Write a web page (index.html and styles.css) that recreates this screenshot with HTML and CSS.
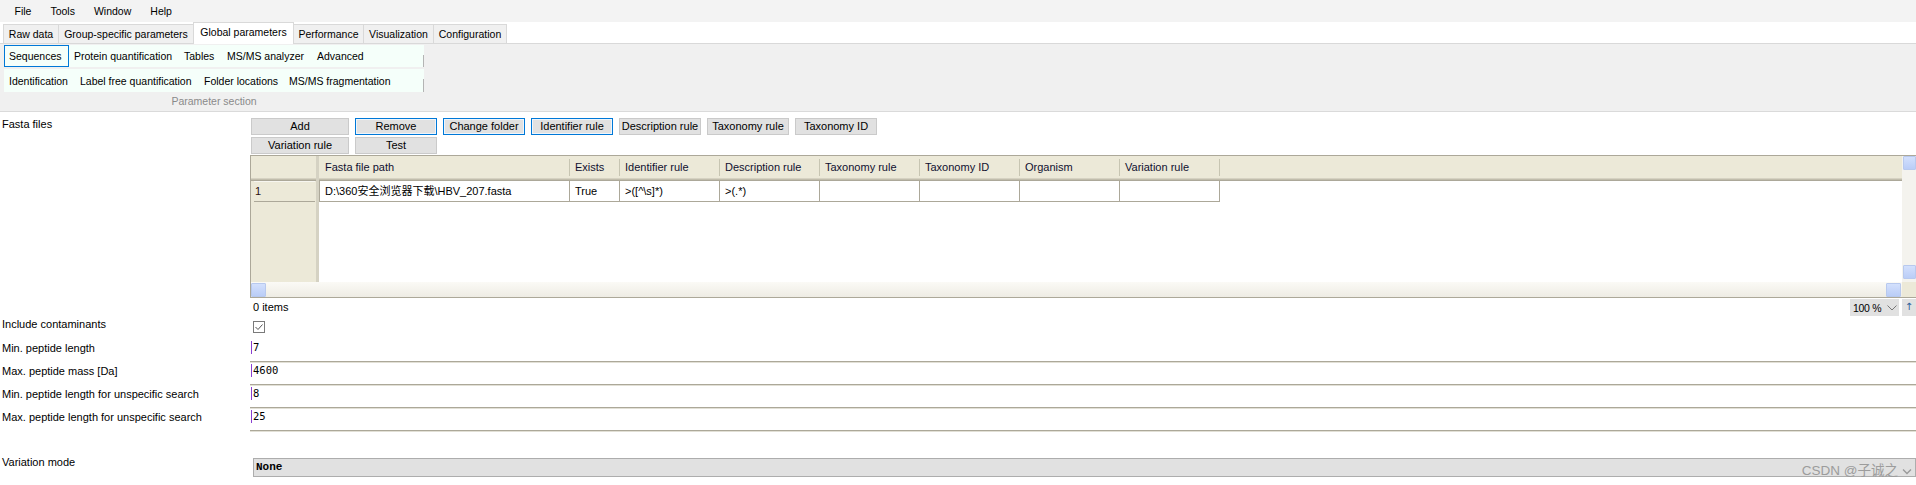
FILE: index.html
```html
<!DOCTYPE html>
<html>
<head>
<meta charset="utf-8">
<title>Global parameters</title>
<link rel="stylesheet" href="styles.css">
</head>
<body>
<div class="menubar">
  <span class="menu">File</span><span class="menu">Tools</span><span class="menu">Window</span><span class="menu">Help</span>
</div>
<div class="tabstrip">
  <div class="tab t-raw">Raw data</div>
  <div class="tab t-group">Group-specific parameters</div>
  <div class="tab t-global active">Global parameters</div>
  <div class="tab t-perf">Performance</div>
  <div class="tab t-vis">Visualization</div>
  <div class="tab t-conf">Configuration</div>
</div>
<div class="ribbon">
  <div class="group">
    <div class="grow">
      <div class="gitem selected w-seq">Sequences</div>
      <div class="gitem w-prot">Protein quantification</div>
      <div class="gitem w-tab">Tables</div>
      <div class="gitem w-msa">MS/MS analyzer</div>
      <div class="gitem w-adv">Advanced</div>
    </div>
    <div class="grow">
      <div class="gitem w-ident">Identification</div>
      <div class="gitem w-lfq">Label free quantification</div>
      <div class="gitem w-fold">Folder locations</div>
      <div class="gitem w-msf">MS/MS fragmentation</div>
    </div>
    <div class="glabel">Parameter section</div>
  </div>
</div>
<div class="content">
  <div class="field fasta">
    <div class="label">Fasta files</div>
    <div class="value">
      <div class="btnrows">
        <div class="btnrow">
          <div class="btn wide">Add</div>
          <div class="btn focus">Remove</div>
          <div class="btn focus">Change folder</div>
          <div class="btn focus">Identifier rule</div>
          <div class="btn">Description rule</div>
          <div class="btn">Taxonomy rule</div>
          <div class="btn">Taxonomy ID</div>
        </div>
        <div class="btnrow">
          <div class="btn wide">Variation rule</div>
          <div class="btn">Test</div>
        </div>
      </div>
      <div class="grid">
        <div class="grid-main">
          <div class="rowhdr-col">
            <div class="corner-hdr"></div>
            <div class="rowhdr">1</div>
          </div>
          <div class="data">
            <div class="hdr-row">
              <div class="hcell c-path">Fasta file path</div>
              <div class="hcell c-exists">Exists</div>
              <div class="hcell c-std">Identifier rule</div>
              <div class="hcell c-std">Description rule</div>
              <div class="hcell c-std">Taxonomy rule</div>
              <div class="hcell c-std">Taxonomy ID</div>
              <div class="hcell c-std">Organism</div>
              <div class="hcell c-std">Variation rule</div>
            </div>
            <div class="drow">
              <div class="dcell c-path first">D:\360安全浏览器下载\HBV_207.fasta</div>
              <div class="dcell c-exists">True</div>
              <div class="dcell c-std">&gt;([^\s]*)</div>
              <div class="dcell c-std">&gt;(.*)</div>
              <div class="dcell c-std"></div>
              <div class="dcell c-std"></div>
              <div class="dcell c-std"></div>
              <div class="dcell c-std"></div>
            </div>
          </div>
        </div>
        <div class="vscroll"><div class="sbtn"></div><div class="sbtn"></div></div>
        <div class="hscroll"><div class="sbtn"></div><div class="sbtn"></div></div>
        <div class="sc-corner"></div>
      </div>
      <div class="gridfoot">
        <span class="count">0 items</span>
        <div class="zoombox">100 %<svg class="chev" width="10" height="6" viewBox="0 0 10 6"><polyline points="0.5,0.5 5,5 9.5,0.5" fill="none" stroke="#777" stroke-width="1"/></svg></div>
        <div class="upbox">↑</div>
      </div>
    </div>
  </div>

  <div class="field row-check">
    <div class="label">Include contaminants</div>
    <div class="value">
      <svg class="checkbox" width="12" height="12" viewBox="0 0 12 12"><rect x="0.5" y="0.5" width="11" height="11" fill="#fff" stroke="#7a7a7a"/><polyline points="2.5,6 5,8.5 9.5,3.5" fill="none" stroke="#555" stroke-width="1"/></svg>
    </div>
  </div>
  <div class="field row-input">
    <div class="label">Min. peptide length</div>
    <div class="value input"><span class="caret-text">7</span></div>
  </div>
  <div class="field row-input">
    <div class="label">Max. peptide mass [Da]</div>
    <div class="value input"><span class="caret-text">4600</span></div>
  </div>
  <div class="field row-input">
    <div class="label">Min. peptide length for unspecific search</div>
    <div class="value input"><span class="caret-text">8</span></div>
  </div>
  <div class="field row-input">
    <div class="label">Max. peptide length for unspecific search</div>
    <div class="value input"><span class="caret-text">25</span></div>
  </div>
  <div class="field row-combo">
    <div class="label">Variation mode</div>
    <div class="value"><div class="combo">None</div></div>
  </div>
</div>
<div class="watermark">CSDN @子诚之<svg width="10" height="7" viewBox="0 0 10 7"><polyline points="1,1.5 5,5.5 9,1.5" fill="none" stroke="#999" stroke-width="1.3"/></svg></div>
</body>
</html>
```
FILE: styles.css
```css
* { box-sizing: border-box; }
html, body { margin: 0; padding: 0; }
body {
  width: 1916px;
  height: 485px;
  overflow: hidden;
  position: relative;
  background: #fff;
  color: #000;
  font-family: "Liberation Sans", "Noto Sans CJK SC", sans-serif;
  font-size: 11px;
}

/* menu */
.menubar {
  height: 22px;
  background: #f3f3f3;
  display: flex;
  align-items: center;
  padding-left: 5px;
  font-size: 10.5px;
}
.menu { padding: 0 9.5px; line-height: 14px; }

/* tabs */
.tabstrip {
  height: 22px;
  background: #fff;
  border-bottom: 1px solid #d9d9d9;
  display: flex;
  align-items: flex-end;
  padding-left: 3px;
  font-size: 10.5px;
}
.tab {
  height: 19px;
  border: 1px solid #d9d9d9;
  border-bottom: none;
  margin-right: -1px;
  background: #f0f0f0;
  display: flex;
  align-items: center;
  justify-content: center;
  line-height: 14px;
  white-space: nowrap;
}
.tab.active {
  height: 22px;
  margin-bottom: -1px;
  background: #fff;
  position: relative;
  z-index: 1;
  padding-bottom: 3px;
}
.t-raw { width: 56px; }
.t-group { width: 136px; }
.t-global { width: 101px; }
.t-perf { width: 71px; }
.t-vis { width: 71px; }
.t-conf { width: 74px; }

/* ribbon */
.ribbon {
  height: 68px;
  background: #f0f0f0;
  border-bottom: 1px solid #dadada;
  padding: 1px 0 0 4px;
  font-size: 10.5px;
}
.group { width: 420px; }
.grow {
  display: flex;
  height: 22px;
  background: linear-gradient(to bottom, transparent 45%, #b4b4b4 45%) right / 1px 100% no-repeat, #f5fffa;
}
.grow + .grow { margin-top: 2px; height: 23px; }
.gitem {
  display: flex;
  align-items: center;
  padding-left: 5px;
  white-space: nowrap;
  border: 1px solid transparent;
  padding-left: 4px;
}
.gitem.selected { border-color: #0078d7; }
.w-seq { width: 65px; }
.w-prot { width: 110px; }
.w-tab { width: 43px; }
.w-msa { width: 90px; }
.w-adv { width: 80px; }
.w-ident { width: 71px; }
.w-lfq { width: 124px; }
.w-fold { width: 85px; }
.w-msf { width: 120px; }
.glabel {
  margin-top: 2px;
  line-height: 14px;
  text-align: center;
  color: #8a8a8a;
}

/* content fields */
.field { display: flex; }
.label {
  width: 250px;
  flex: none;
  padding-left: 2px;
  white-space: nowrap;
}
.value { flex: 1; min-width: 0; }

.fasta .label { padding-top: 3px; line-height: 18px; }
.fasta .value { padding-top: 6px; }

.btnrows { display: flex; flex-direction: column; gap: 2px; margin-bottom: 1px; padding-left: 1px; }
.btnrow { display: flex; gap: 6px; }
.btn {
  width: 82px;
  height: 17px;
  background: #e1e1e1;
  border: 1px solid #cacaca;
  text-align: center;
  line-height: 15px;
  white-space: nowrap;
}
.btn.wide { width: 98px; }
.btn.focus {
  border-color: #0078d7;
  box-shadow: inset 0 0 0 1px #eef5fc;
}

/* data grid */
.grid {
  display: grid;
  grid-template-columns: 1fr 14px;
  grid-template-rows: 127px 15px;
  height: 143px;
  border-bottom: 1px solid #aca899;
}
.grid-main {
  display: flex;
  border-left: 1px solid #aca899;
  border-top: 1px solid #aca899;
  background: #fff;
  overflow: hidden;
}
.rowhdr-col {
  width: 68px;
  flex: none;
  background: #ece9d8;
  border-right: 3px solid #d5d2c3;
}
.corner-hdr {
  height: 25px;
  background: linear-gradient(#ece9d8 0 22px, #d6d2c2 22px 23px, #c1bdac 23px 24px, #aca899 24px 25px);
}
.rowhdr {
  height: 21px;
  margin: 0 1px 0 3px;
  border-top: 1px solid #f7f6f0;
  border-bottom: 1px solid #aca899;
  padding-left: 1px;
  line-height: 19px;
  color: #2a1010;
}
.data { flex: 1; min-width: 0; }
.hdr-row {
  display: flex;
  height: 25px;
  background: linear-gradient(#ece9d8 0 22px, #d6d2c2 22px 23px, #c1bdac 23px 24px, #aca899 24px 25px);
}
.hcell {
  height: 22px;
  line-height: 22px;
  padding-left: 6px;
  white-space: nowrap;
  color: #101030;
  background: linear-gradient(#c7c5b2, #c7c5b2) right 3px / 1px 17px no-repeat;
}
.c-path { width: 251px; flex: none; }
.c-exists { width: 50px; flex: none; }
.c-std { width: 100px; flex: none; }
.hcell.c-exists, .hcell.c-std { padding-left: 5px; }
.drow { display: flex; height: 21px; }
.dcell {
  height: 21px;
  border-right: 1px solid #aca899;
  border-bottom: 1px solid #aca899;
  padding-left: 5px;
  line-height: 20px;
  white-space: nowrap;
  overflow: hidden;
}
.dcell.first { border-left: 1px solid #aca899; }

.sbtn {
  width: 14px;
  height: 14px;
  background: linear-gradient(#d3e0fd, #bacdf7);
  border: 1px solid #e4ecfd;
  outline: 1px solid #b8c9ee;
  outline-offset: -1px;
  border-radius: 1px;
}
.vscroll {
  background: #f4f3ee;
  border-top: 1px solid #aca899;
  display: flex;
  flex-direction: column;
  justify-content: space-between;
  padding: 0 0 3px 1px;
}
.vscroll .sbtn { width: 13px; }
.hscroll {
  background: linear-gradient(#fbfaf6, #eeece4);
  border-left: 1px solid #aca899;
  display: flex;
  justify-content: space-between;
  align-items: center;
  padding-right: 1px;
}
.hscroll .sbtn { width: 15px; height: 14px; }
.sc-corner { background: #ece9d8; }

.gridfoot {
  height: 18px;
  display: flex;
  align-items: flex-start;
}
.count { margin: 1px 0 0 3px; line-height: 16px; }
.zoombox {
  margin: 1px 0 0 auto;
  width: 49px;
  height: 17px;
  background: #e1e1e1;
  display: flex;
  align-items: center;
  padding-left: 3px;
  font-size: 10.5px;
  letter-spacing: -0.3px;
}
.chev { margin-left: 6px; }
.upbox {
  margin: 1px 0 0 3px;
  width: 14px;
  height: 17px;
  background: #e1e1e1;
  text-align: center;
  line-height: 16px;
  font-family: "DejaVu Sans", sans-serif;
  font-size: 10px;
  color: #2b5f9a;
}

.row-check { height: 23px; }
.row-check .label { line-height: 16px; }
.checkbox { display: block; margin: 5px 0 0 3px; }

.row-input { height: 23px; }
.row-input .label { line-height: 18px; }
.input {
  height: 23px;
  border-bottom: 1px solid #aca899;
  box-shadow: 0 1px 0 #e2e0d6;
  padding: 2px 0 0 1px;
}
.caret-text {
  display: inline-block;
  height: 13px;
  border-left: 1px solid #8a3fd1;
  padding-left: 1px;
  line-height: 13px;
  font-family: "DejaVu Sans Mono", monospace;
  font-size: 10.5px;
}

.row-combo { margin-top: 22px; }
.row-combo .label { line-height: 18px; }
.combo {
  margin: 5px 0 0 3px;
  height: 19px;
  background: #e1e1e1;
  border: 1px solid #adadad;
  padding-left: 2px;
  line-height: 17px;
  font-family: "Liberation Mono", monospace;
  font-size: 11px;
  font-weight: bold;
}

.watermark {
  position: absolute;
  right: 4px;
  bottom: 6px;
  display: flex;
  align-items: center;
  gap: 4px;
  color: #9c9c9c;
  font-size: 13.5px;
  line-height: 16px;
  font-family: "Liberation Sans", "Noto Sans CJK SC", sans-serif;
}
```
